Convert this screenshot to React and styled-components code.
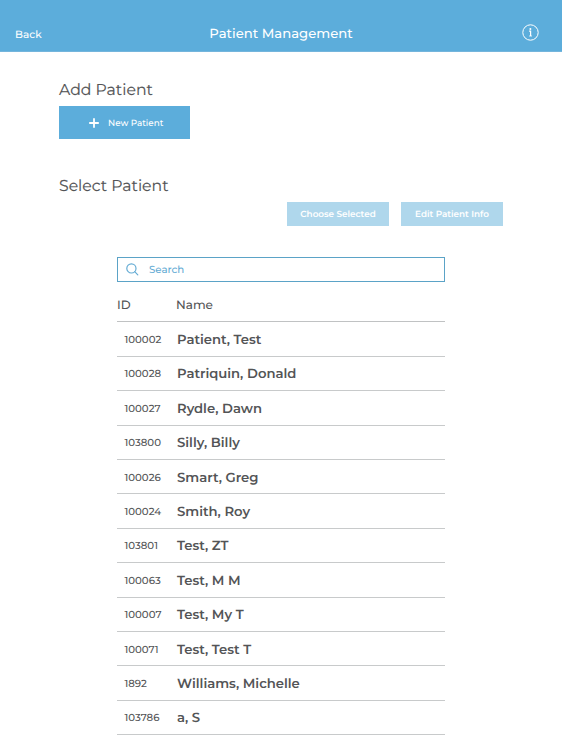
import React from "react";
import styled, { createGlobalStyle } from "styled-components";

const GlobalStyle = createGlobalStyle`
  * {
    box-sizing: border-box;
  }

  body {
    margin: 0;
    background: #ffffff;
    color: #535456;
    font-family: Montserrat, Inter, "Liberation Sans", sans-serif;
    font-weight: 500;
    overflow: hidden;
    text-rendering: geometricPrecision;
  }

  button {
    font-family: inherit;
    font-weight: inherit;
    text-rendering: inherit;
    border: none;
    padding: 0;
  }
`;

const View = styled.div`
  display: flex;
  flex-direction: column;
  height: 750px;
`;

const Header = styled.header`
  display: grid;
  grid-template-columns: 1fr auto 1fr;
  align-items: center;
  height: 52px;
  padding: 15px 15px 0;
  background: #5caddb;
  border-bottom: 1px solid #74b5dc;
  color: #ffffff;
`;

const BackButton = styled.button`
  justify-self: start;
  padding-top: 3px;
  background: none;
  color: inherit;
  font-size: 10.5px;
  line-height: 14px;
`;

const Title = styled.h1`
  margin: 0;
  padding-top: 1px;
  font-size: 13.2px;
  font-weight: 500;
  line-height: 18px;
`;

const InfoIcon = styled.svg`
  justify-self: end;
  width: 17px;
  height: 17px;
  margin: -2px 8px 0 0;
`;

const Content = styled.main`
  display: flex;
  flex-direction: column;
  padding: 28px 59px 0;
`;

const Heading = styled.h2`
  margin: 0;
  font-size: 15.7px;
  font-weight: 400;
  line-height: 20px;
  -webkit-text-stroke: 0.15px #535456;
`;

const NewButton = styled.button`
  display: flex;
  align-items: center;
  gap: 9px;
  width: 131px;
  height: 33px;
  margin: 6px 0 37px;
  padding: 1px 0 0 30px;
  background: #5caddb;
  color: #ffffff;
  font-size: 8.8px;
`;

const Actions = styled.div`
  display: flex;
  justify-content: flex-end;
  gap: 12px;
  margin-top: 6px;
`;

const ActionButton = styled.button`
  width: 102px;
  height: 24px;
  padding-top: 1px;
  background: #afd7ec;
  color: #ffffff;
  font-size: 8.8px;
  font-weight: 600;
`;

const Patients = styled.section`
  display: flex;
  flex-direction: column;
  width: 328px;
  margin: 31px 0 0 58px;
`;

const SearchBox = styled.div`
  display: flex;
  align-items: center;
  gap: 10px;
  height: 25px;
  padding-left: 8px;
  border: 1px solid #5ba3c7;
  color: #65acd4;
  font-size: 10.2px;
`;

const TableHead = styled.div`
  display: grid;
  grid-template-columns: 59px 1fr;
  align-items: center;
  height: 40.4px;
  padding-top: 8px;
  border-bottom: 1px solid #c0c2c3;
  font-size: 12px;
`;

const Row = styled.div`
  display: grid;
  grid-template-columns: 52.5px 1fr;
  align-items: center;
  height: 34.4px;
  padding-left: 7.5px;
  border-bottom: 1px solid #c8cacb;
`;

const PatientId = styled.div`
  padding-top: 1px;
  font-size: 10.2px;
`;

const PatientName = styled.div`
  padding-top: 2px;
  font-size: 13.2px;
  font-weight: 600;
`;

const patients = [
  { id: "100002", name: "Patient, Test" },
  { id: "100028", name: "Patriquin, Donald" },
  { id: "100027", name: "Rydle, Dawn" },
  { id: "103800", name: "Silly, Billy" },
  { id: "100026", name: "Smart, Greg" },
  { id: "100024", name: "Smith, Roy" },
  { id: "103801", name: "Test, ZT" },
  { id: "100063", name: "Test, M M" },
  { id: "100007", name: "Test, My T" },
  { id: "100071", name: "Test, Test T" },
  { id: "1892", name: "Williams, Michelle" },
  { id: "103786", name: "a, S" },
];

export default function App() {
  return (
    <View>
      <GlobalStyle />
      <Header>
        <BackButton>Back</BackButton>
        <Title>Patient Management</Title>
        <InfoIcon viewBox="0 0 17 17" fill="none" stroke="#ffffff">
          <circle cx="8.5" cy="8.5" r="7.7" strokeWidth="1" />
          <path d="M7.1 7.2h1.5v4.7" strokeWidth="1.2" />
          <path d="M7.1 12h2.9" strokeWidth="0.8" />
          <circle cx="8.4" cy="5" r="1" fill="#ffffff" stroke="none" />
        </InfoIcon>
      </Header>
      <Content>
        <Heading>Add Patient</Heading>
        <NewButton>
          <svg width="10" height="10" viewBox="0 0 10 10" stroke="#ffffff" strokeWidth="1.8">
            <path d="M5 0.2v9.6M0.2 5h9.6" />
          </svg>
          New Patient
        </NewButton>
        <Heading>Select Patient</Heading>
        <Actions>
          <ActionButton>Choose Selected</ActionButton>
          <ActionButton>Edit Patient Info</ActionButton>
        </Actions>
        <Patients>
          <SearchBox>
            <svg width="13" height="13" viewBox="0 0 13 13" fill="none" stroke="#65acd4" strokeWidth="1.2">
              <circle cx="5.4" cy="5.4" r="4.6" />
              <path d="M8.7 8.7l3.1 3.1" strokeLinecap="round" />
            </svg>
            Search
          </SearchBox>
          <TableHead>
            <div>ID</div>
            <div>Name</div>
          </TableHead>
          {patients.map((patient) => (
            <Row key={patient.id}>
              <PatientId>{patient.id}</PatientId>
              <PatientName>{patient.name}</PatientName>
            </Row>
          ))}
        </Patients>
      </Content>
    </View>
  );
}
